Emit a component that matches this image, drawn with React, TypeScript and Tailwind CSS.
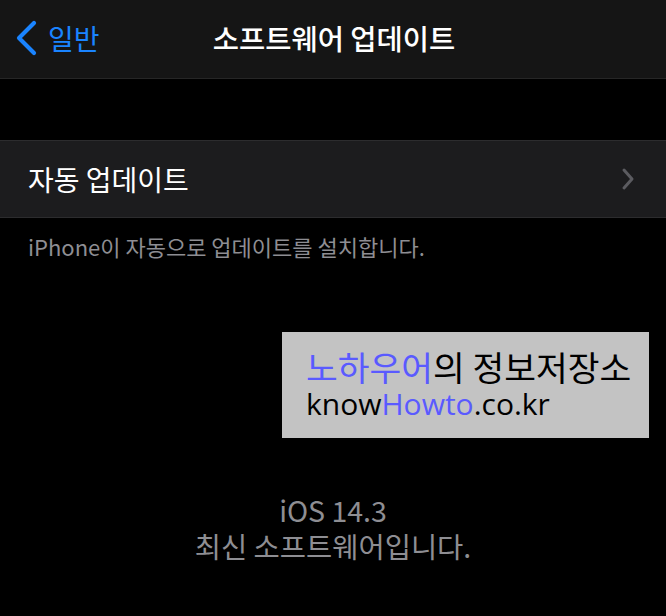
import React from "react";

const kr = { fontFamily: '"Noto Sans CJK KR", "Noto Sans", sans-serif' };
const wm = { fontFamily: '"Open Sans", "Noto Sans CJK KR", sans-serif' };

export default function App() {
  return (
    <div className="relative w-[666px] h-[616px] bg-black overflow-hidden" style={kr}>
      {/* Nav bar */}
      <div className="relative h-[79px] bg-[#151515] border-b border-[#262626] flex items-center">
        <div className="flex items-center pl-[14px] gap-[10px] text-[#1a84ff] -mt-[2px]">
          <svg width="24" height="36" viewBox="0 0 24 36" fill="none">
            <path d="M20 3 L5 18 L20 33" stroke="#1a84ff" strokeWidth="4.2" strokeLinecap="round" strokeLinejoin="round" />
          </svg>
          <span className="text-[28px] leading-none">일반</span>
        </div>
        <div className="absolute inset-0 flex items-center justify-center -mt-[2px]">
          <span className="text-[28.5px] leading-none font-medium text-white pl-[2px]">소프트웨어 업데이트</span>
        </div>
      </div>

      {/* Spacer */}
      <div className="h-[61px]" />

      {/* Row */}
      <div className="h-[78px] bg-[#1c1c1e] border-y border-[#2c2c2e] flex items-center justify-between pl-[28px] pr-[31px]">
        <span className="text-[28px] leading-none text-white">자동 업데이트</span>
        <svg width="14" height="24" viewBox="0 0 14 24" fill="none">
          <path d="M3 3 L11 12 L3 21" stroke="#5b5b60" strokeWidth="3" strokeLinecap="round" strokeLinejoin="round" />
        </svg>
      </div>

      {/* Footer */}
      <div className="pl-[28px] pt-[17px] text-[22px] leading-none text-[#8e8e93]">
        iPhone이 자동으로 업데이트를 설치합니다.
      </div>

      {/* Version */}
      <div className="mt-[235px] flex flex-col items-center text-[#8e8e93] text-[28.5px] leading-[36px]">
        <span>iOS 14.3</span>
        <span>최신 소프트웨어입니다.</span>
      </div>

      {/* Watermark */}
      <div className="absolute left-[282px] top-[332px] w-[367px] h-[106px] bg-[#c3c3c3] pl-[24px] pt-[14px] text-black" style={wm}>
        <div className="text-[34.5px] leading-[40px]" style={kr}>
          <span className="text-[#5a5aff]">노하우어</span>의 정보저장소
        </div>
        <div className="text-[30px] leading-[36px]">
          know<span className="text-[#5a5aff]">Howto</span>.co.kr
        </div>
      </div>
    </div>
  );
}
